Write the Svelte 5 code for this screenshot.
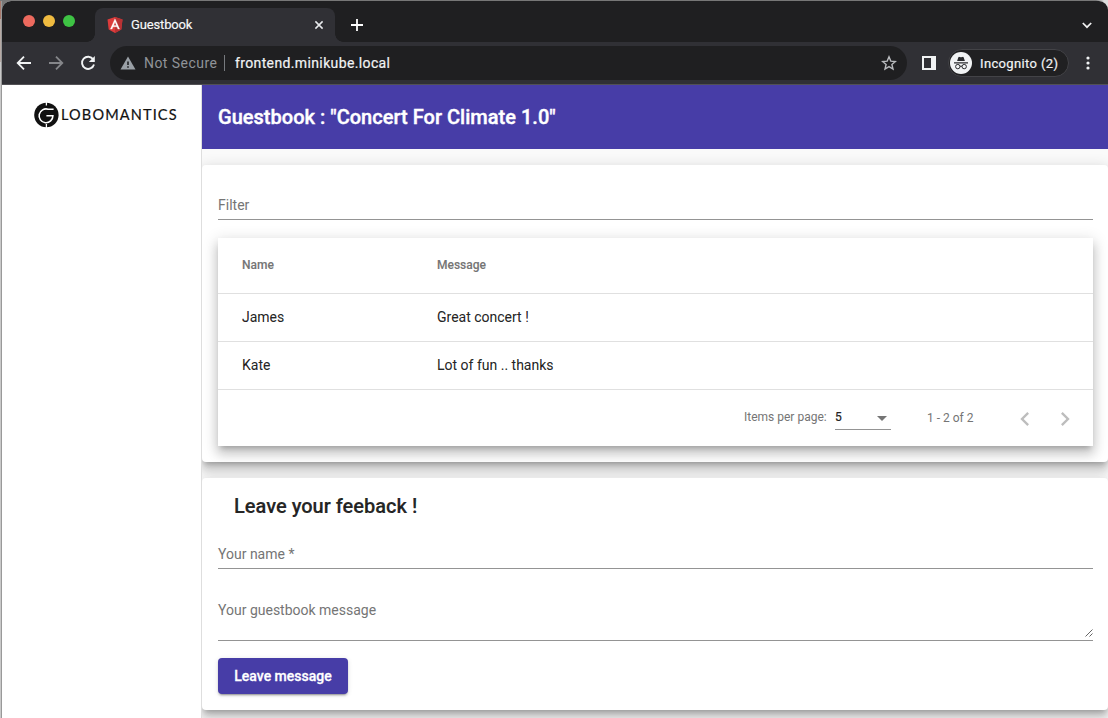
<script>
  const entries = [
    { name: 'James', message: 'Great concert !' },
    { name: 'Kate', message: 'Lot of fun .. thanks' }
  ];
</script>

<div class="desktop">
  <div class="edge"></div>
  <div class="window">
    <div class="tabstrip">
      <div class="lights"><i class="red"></i><i class="yellow"></i><i class="green"></i></div>
      <div class="tab">
        <svg class="favicon" width="16" height="18" viewBox="0 0 16 18">
          <path d="M8 1 15.5 3.6 14.3 13.5 8 17 1.7 13.5.5 3.6Z" fill="#dd3b3b" />
          <path d="M8 1 15.5 3.6 14.3 13.5 8 17Z" fill="#b93234" />
          <path d="M8 2.8 3.4 13.1H5.1L6 10.8H10L10.9 13.1H12.6ZM8 6 9.4 9.4H6.6Z" fill="#fff" stroke="#fff" stroke-width=".3" fill-rule="evenodd" />
        </svg>
        <span class="tabname">Guestbook</span>
        <svg class="close" width="10" height="10" viewBox="0 0 10 10"><path d="M1.4 1.4 8.6 8.6M8.6 1.4 1.4 8.6" stroke="#e8eaed" stroke-width="1.5" /></svg>
      </div>
      <svg class="plus" width="12" height="12" viewBox="0 0 12 12"><path d="M6 0V12M0 6H12" stroke="#fff" stroke-width="1.8" /></svg>
      <svg class="chevron" width="10" height="7" viewBox="0 0 10 7"><path d="M.8 1 5 5.2 9.2 1" fill="none" stroke="#f1f1f2" stroke-width="1.7" /></svg>
    </div>

    <div class="toolbar">
      <svg class="back" width="16" height="16" viewBox="0 0 16 16"><path d="M15 8H2M8 1.7 1.7 8 8 14.3" fill="none" stroke="#f1f3f4" stroke-width="1.8" /></svg>
      <svg class="forward" width="16" height="16" viewBox="0 0 16 16"><path d="M1 8H14M8 1.7 14.3 8 8 14.3" fill="none" stroke="#85868a" stroke-width="1.8" /></svg>
      <svg class="reload" width="16" height="16" viewBox="0 0 16 16"><path d="M13.2 4.4A6.1 6.1 0 1 0 14 9.5" fill="none" stroke="#f1f3f4" stroke-width="1.9" /><path d="M14.8 1V7H8.8Z" fill="#f1f3f4" /></svg>
      <div class="omnibox">
        <svg class="warning" width="16" height="14" viewBox="0 0 16 14"><path d="M8 .5 15.5 13.5H.5Z" fill="#9aa0a6" /><path d="M8 5.5V9M8 10.2V11.8" stroke="#202124" stroke-width="1.6" /></svg>
        <span class="insecure">Not Secure</span>
        <i class="divider"></i>
        <span class="url">frontend.minikube.local</span>
        <svg class="star" width="16" height="16" viewBox="0 0 16 16"><path d="M8 1.8 9.8 6.1 14.4 6.5 10.9 9.5 12 14 8 11.6 4 14 5.1 9.5 1.6 6.5 6.2 6.1Z" fill="none" stroke="#b8babd" stroke-width="1.4" /></svg>
      </div>
      <svg class="panel" width="14" height="14" viewBox="0 0 14 14"><path d="M0 0H14V14H0ZM2 2V12H9V2Z" fill="#f1f3f4" fill-rule="evenodd" /></svg>
      <div class="incognito">
        <svg width="22" height="22" viewBox="0 0 22 22">
          <circle cx="11" cy="11" r="11" fill="#f1f3f4" />
          <path d="M7.1 9 8.3 5.4Q8.6 4.7 9.4 4.9L11 5.3 12.6 4.9Q13.4 4.7 13.7 5.4L14.9 9Z" fill="#292a2d" />
          <path d="M4 10.9H18" stroke="#292a2d" stroke-width="1.1" />
          <circle cx="7.8" cy="14.6" r="2.2" fill="none" stroke="#292a2d" />
          <circle cx="14.2" cy="14.6" r="2.2" fill="none" stroke="#292a2d" />
          <path d="M9.9 14.4Q11 13.7 12.1 14.4" fill="none" stroke="#292a2d" />
        </svg>
        <span>Incognito (2)</span>
      </div>
      <svg class="dots" width="4" height="14" viewBox="0 0 4 14"><g fill="#f1f3f4"><circle cx="2" cy="2" r="1.6" /><circle cx="2" cy="7" r="1.6" /><circle cx="2" cy="12" r="1.6" /></g></svg>
    </div>

    <div class="page">
      <aside>
        <div class="logo">
          <svg width="25" height="26" viewBox="0 0 25 26">
            <circle cx="12.4" cy="13" r="12.2" fill="#111" />
            <path d="M12.4 0V3.4M12.4 22V26" stroke="#fff" stroke-width="1.3" />
            <path d="M19.6 7.3H14.2A6.9 6.9 0 1 0 18.9 13.8H12.4" fill="none" stroke="#fff" stroke-width="1.6" />
          </svg>
          <span>LOBOMANTICS</span>
        </div>
      </aside>

      <main>
        <header>Guestbook : "Concert For Climate 1.0"</header>
        <section class="card list">
          <div class="field filter">Filter</div>
          <div class="table">
            <div class="row head"><span>Name</span><span>Message</span></div>
            {#each entries as entry}
              <div class="row"><span>{entry.name}</span><span>{entry.message}</span></div>
            {/each}
            <div class="paginator">
              <span class="per">Items per page:</span>
              <div class="select"><span>5</span><svg width="10" height="5" viewBox="0 0 10 5"><path d="M0 0H10L5 5Z" fill="#757575" /></svg></div>
              <span class="range">1 - 2 of 2</span>
              <svg class="prev" width="28" height="28" viewBox="0 0 24 24"><path d="M15.41 7.41 14 6l-6 6 6 6 1.41-1.41L10.83 12z" fill="#bdbdbd" /></svg>
              <svg class="next" width="28" height="28" viewBox="0 0 24 24"><path d="M10 6 8.59 7.41 13.17 12l-4.58 4.59L10 18l6-6z" fill="#bdbdbd" /></svg>
            </div>
          </div>
        </section>
        <section class="card feedback">
          <h2>Leave your feeback !</h2>
          <div class="field name">Your name *</div>
          <div class="field message"><span>Your guestbook message</span>
            <svg width="8" height="8" viewBox="0 0 8 8"><path d="M.5 7.5 7.5.5M4.5 7.5 7.5 4.5" stroke="#555" stroke-width=".9" /></svg>
          </div>
          <button>Leave message</button>
        </section>
      </main>
    </div>
  </div>
</div>

<style>
  :global(body) { margin: 0; overflow: hidden; }
  * { box-sizing: border-box; }
  svg { display: block; flex: none; }
  span, header, h2, button { white-space: nowrap; }
  .desktop { width: 1108px; height: 718px; overflow: hidden; display: flex; padding-top: 1px; background: linear-gradient(90deg, #777 0 1096px, #ddd 1104px); font-family: Roboto, sans-serif; }
  .edge { width: 2px; flex: none; background: linear-gradient(#a8786b 0 18px, #b7aaa5 18px 61px, #c9c9c9 61px); border-right: 1px solid #999; }
  .window { width: 1106px; height: 717px; border-radius: 9px 9px 0 0; overflow: hidden; background: #fff; }
  .tabstrip { height: 41px; background: #1f1f21; display: flex; align-items: flex-start; }
  .lights { display: flex; gap: 8px; margin: 14px 0 0 21px; width: 72px; }
  .lights i { width: 12px; height: 12px; border-radius: 50%; }
  .red { background: #ed6a5e; }
  .yellow { background: #f0bb40; }
  .green { background: #3ec344; }
  .tab { width: 240px; height: 34px; margin-top: 7px; border-radius: 8px 8px 0 0; background: #303035; display: flex; align-items: center; padding: 0 12px; position: relative; }
  .tab::before, .tab::after { content: ''; position: absolute; bottom: 0; width: 8px; height: 8px; }
  .tab::before { left: -8px; background: radial-gradient(circle at 0 0, #1f1f21 7.5px, #303035 8px); }
  .tab::after { right: -8px; background: radial-gradient(circle at 100% 0, #1f1f21 7.5px, #303035 8px); }
  .tabname { margin-left: 8px; padding-bottom: 2px; color: #f8f9fa; font-size: 13px; letter-spacing: -.15px; -webkit-text-stroke: .15px #f8f9fa; }
  .close { margin-left: auto; margin-right: -1px; }
  .plus { margin: 18px 0 0 16px; }
  .chevron { margin: 21px 16px 0 auto; }
  .toolbar { height: 43px; background: #303035; border-bottom: 1px solid #525155; display: flex; align-items: center; color: #f1f3f4; }
  .back { margin-left: 14px; }
  .forward, .reload { margin-left: 16px; }
  .omnibox { width: 797px; height: 34px; margin-left: 14px; border-radius: 17px; background: #1f1f21; display: flex; align-items: center; padding: 0 10px; font-size: 14px; }
  .insecure { margin-left: 8px; color: #8f9398; letter-spacing: .45px; width: 80px; }
  .divider { width: 1px; height: 16px; background: #777a7e; }
  .url { margin-left: 10px; letter-spacing: .37px; -webkit-text-stroke: .2px #f1f3f4; }
  .star { margin-left: auto; }
  .panel { margin-left: 15px; }
  .incognito { display: flex; align-items: center; width: 121px; height: 28px; margin-left: 12px; border: 1px solid #434347; border-radius: 14px; background: #202022; padding-left: 1px; font-size: 13px; letter-spacing: .36px; -webkit-text-stroke: .2px #f1f3f4; }
  .incognito span { margin-left: 8px; }
  .dots { margin-left: 17px; }
  .page { display: flex; height: 633px; }
  aside { width: 200px; flex: none; border-right: 1px solid #dedede; padding: 17px 0 0 32px; }
  .logo { display: flex; align-items: center; gap: 2px; color: #111; font: 14.5px/26px Lato, sans-serif; letter-spacing: 1.15px; -webkit-text-stroke: .2px #111; }
  main { flex: 1; min-width: 0; height: 633px; overflow: hidden; background: #fafafa; color: rgba(0, 0, 0, .87); }
  header { height: 64px; padding-left: 16px; background: #473da7; color: #fff; font-size: 20px; font-weight: 500; line-height: 64px; letter-spacing: .02px; -webkit-text-stroke: .4px #fff; }
  .card { margin-top: 16px; border-radius: 4px; background: #fff; padding: 0 16px; box-shadow: 0 5px 5px -3px rgba(0,0,0,.2), 0 8px 10px 1px rgba(0,0,0,.14), 0 3px 14px 2px rgba(0,0,0,.12); }
  .list { height: 297px; }
  .field { width: 875px; border-bottom: 1px solid #949494; color: #757575; font-size: 14px; line-height: 18px; }
  .filter { height: 55px; padding-top: 31px; }
  .table { width: 875px; height: 208px; margin-top: 18px; background: #fff; box-shadow: 0 5px 5px -3px rgba(0,0,0,.2), 0 8px 10px 1px rgba(0,0,0,.14), 0 3px 14px 2px rgba(0,0,0,.12); }
  .row { display: grid; grid-template-columns: 195px 1fr; align-items: center; height: 48px; padding: 0 0 2px 24px; border-bottom: 1px solid #e0e0e0; font-size: 14px; -webkit-text-stroke: .1px currentColor; }
  .head { height: 56px; color: #757575; font-size: 12px; font-weight: 500; }
  .paginator { display: flex; height: 56px; color: #757575; font-size: 12px; line-height: 16px; }
  .per { margin-left: 526px; width: 91px; padding-top: 19px; }
  .select { width: 56px; height: 40px; border-bottom: 1px solid #949494; padding: 19px 4px 0 0; display: flex; justify-content: space-between; color: #212121; -webkit-text-stroke: .2px #212121; }
  .select svg { margin-top: 7px; }
  .range { margin-left: 36px; padding-top: 20px; width: 84px; }
  .prev { margin: 15px 0 0 0; }
  .next { margin: 15px 0 0 12px; }
  .feedback { height: 232px; }
  h2 { margin: 0; padding: 12px 0 0 16px; height: 44px; font-size: 20px; line-height: 32px; font-weight: 500; -webkit-text-stroke: .2px currentColor; }
  .name { height: 47px; padding-top: 23px; }
  .message { height: 72px; padding: 32px 0 3px; display: flex; justify-content: space-between; }
  .message svg { align-self: flex-end; }
  button { display: block; width: 130px; height: 36px; margin-top: 17px; padding: 0; border: 0; border-radius: 4px; background: #473da7; color: #fff; font: 500 14px/36px Roboto, sans-serif; -webkit-text-stroke: .3px #fff; box-shadow: 0 3px 1px -2px rgba(0,0,0,.2), 0 2px 2px rgba(0,0,0,.14), 0 1px 5px rgba(0,0,0,.12); }
</style>
